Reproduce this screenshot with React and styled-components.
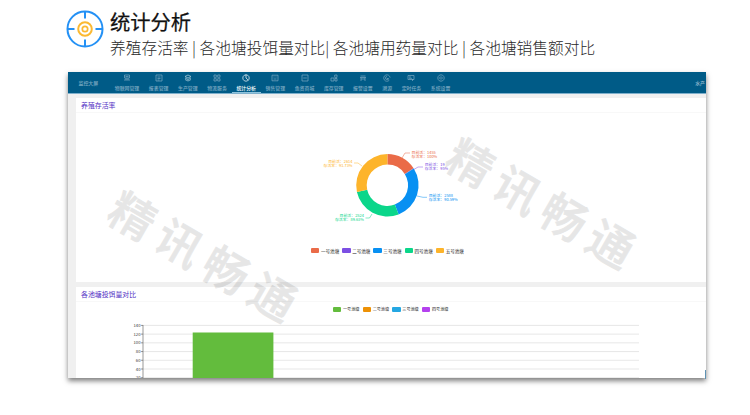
import React from 'react'
import styled, { createGlobalStyle } from 'styled-components'

const GlobalStyle = createGlobalStyle`
  * { box-sizing: border-box; }
  body {
    margin: 0;
    background: #fff;
    font-family: "Noto Sans CJK SC", "Noto Sans", sans-serif;
    overflow: hidden;
  }
`

const Page = styled.div`
  width: 750px;
  height: 415px;
  overflow: hidden;
`

const Header = styled.header`
  display: flex;
  gap: 6px;
  height: 72px;
  padding: 10px 0 0 66px;
`

const HeaderText = styled.div`
  white-space: nowrap;
`

const Title = styled.h1`
  margin: -2px 0 0;
  font-size: 20.3px;
  line-height: 26px;
  font-weight: 400;
  color: #111;
  -webkit-text-stroke: 0.25px #111;
`

const SubTitle = styled.p`
  margin: 1px 0 0;
  font-size: 15.73px;
  line-height: 26px;
  font-weight: 300;
  color: #2a2a2a;
`

const Screen = styled.main`
  position: relative;
  width: 638px;
  height: 306px;
  margin-left: 68px;
  background: #f0f0f0;
  box-shadow: 0 3px 5px rgba(0, 0, 0, 0.5);
`

const Content = styled.div`
  height: 306px;
  overflow: hidden;
`

const Nav = styled.nav`
  display: flex;
  height: 22px;
  background: #005b87;
  color: #7ba9c2;
  font-size: 4.9px;
  line-height: 6px;
  font-weight: 500;
  white-space: nowrap;
  border-bottom: 0.5px solid #7fb0cc;
`

const NavHome = styled.div`
  width: 42px;
  padding: 8px 0 0 10.5px;
`

const NavItem = styled.div`
  display: flex;
  flex-direction: column;
  align-items: center;
  gap: 2.5px;
  padding: 2px 4.8px 0;
  color: ${props => (props.$active ? '#fff' : '#7ba9c2')};
  border-bottom: 1px solid ${props => (props.$active ? '#8ec3dc' : 'transparent')};
`

const NavUser = styled.div`
  margin-left: auto;
  padding: 8px 1px 0 0;
  color: #9dbfd2;
`

const Panel = styled.section`
  height: ${props => props.$height}px;
  margin: ${props => props.$top}px 0 0 8px;
  background: #fff;
`

const PanelTitle = styled.h2`
  height: 15px;
  margin: 0;
  padding-left: 5px;
  font-size: 6.9px;
  line-height: 15px;
  font-weight: 400;
  color: #5330c4;
  border-bottom: 1px solid #f8f8f8;
`

const Chart = styled.svg`
  display: block;
  width: 630px;
  height: ${props => props.$height}px;
`

const Legend = styled.div`
  display: flex;
  gap: ${props => props.$gap}px;
  padding: ${props => props.$padding};
  font-size: ${props => props.$size}px;
  line-height: 6px;
  white-space: nowrap;
  color: #222;
`

const LegendItem = styled.div`
  display: flex;
  align-items: center;
  gap: 1.6px;
`

const Swatch = styled.span`
  width: 8.4px;
  height: 5px;
  border-radius: 1px;
  background: ${props => props.$color};
`

const Watermark = styled.div`
  position: absolute;
  left: ${props => props.$x - 108}px;
  top: ${props => props.$y - 32}px;
  width: 216px;
  height: 64px;
  display: flex;
  transform: rotate(30deg);
  font-size: 45.5px;
  line-height: 64px;
  font-weight: 500;
  color: #000;
  -webkit-text-stroke: 0.8px #000;
  opacity: 0.095;
  pointer-events: none;

  span {
    width: 54px;
    text-align: center;
  }
`

const CornerMark = styled.div`
  position: absolute;
  right: 0;
  bottom: -1px;
  width: 1px;
  height: 9px;
  background: #5f93b4;
`

const navItems = [
  { name: '物联网管理', icon: 'M1.5 1h5v3h-5zM1 6h6M2 5h4M2.5 2.5h3' },
  { name: '报表管理', icon: 'M1 1h6v6h-6zM2.5 3h3M2.5 4.5h3M2.5 6h2' },
  { name: '生产管理', icon: 'M4 1l3 1.5L4 4 1 2.5zM1 4l3 1.5L7 4M1 5.5L4 7l3-1.5', bright: true },
  { name: '物流服务', icon: 'M1 1h2.3v2.3H1zM4.7 1H7v2.3H4.7zM1 4.7h2.3V7H1zM4.7 4.7H7V7H4.7z' },
  { name: '统计分析', icon: 'M4 .8a3.2 3.2 0 1 0 .01 0M4 .8V4l2.3 2.2' },
  { name: '销售管理', icon: 'M1 1.2h6v5.6H1zM2.5 3h1M4.5 3h1M2.5 5h3' },
  { name: '鱼资商城', icon: 'M1 1h6v6H1zM2.2 4h3.6' },
  { name: '库存管理', icon: 'M1 4h3v3H1zM4.7 1H7v2.4H4.7zM5 4.5h2V7H5z' },
  { name: '报警设置', icon: 'M1.5 2h5M1 3.5h6M2 5h4M2 3.5V7M6 3.5V7' },
  { name: '溯源', icon: 'M6.3 6.2a3.2 3.2 0 1 1 .8-2.6M4 2.5a1.5 1.5 0 1 0 1.5 1.5M4 4l1.5 1.5' },
  { name: '定时任务', icon: 'M1 1.5h6v4H1zM2 3h2M2 4.3h3M5.5 5v2' },
  { name: '系统设置', icon: 'M4 .8a3.2 3.2 0 1 0 .01 0M4 2.8a1.2 1.2 0 1 0 .01 0' }
]

const ponds = [
  { name: '一号池塘', value: 1455, color: '#ea6b48' },
  { name: '二号池塘', value: 19, color: '#7c4fe3' },
  { name: '三号池塘', value: 2588, color: '#0890f2' },
  { name: '四号池塘', value: 2524, color: '#0bd68a' },
  { name: '五号池塘', value: 2614, color: '#fdb42b' }
]

const feedPonds = [
  { name: '一号池塘', color: '#63bc3d' },
  { name: '二号池塘', color: '#ed9106' },
  { name: '三号池塘', color: '#25a7e2' },
  { name: '四号池塘', color: '#b441ee' }
]

// label positions around the donut
const labels = [
  { x: 335.5, y: 40.6, rate: '100%', line: 'M326 45l3-5h5' },
  { x: 348.7, y: 52.8, rate: '95%', line: 'M337 57l5-3h5' },
  { x: 352.7, y: 83.6, rate: '90.59%', line: 'M341 83l6 1.3h4' },
  { x: 287.8, y: 104.4, rate: '89.63%', anchor: 'end', line: 'M296 101l-2.5 4h-4' },
  { x: 276.4, y: 49.6, rate: '91.73%', anchor: 'end', line: 'M286 53l-4-3h-4' }
]

const CX = 311.4
const CY = 72.3
const point = (r, angle) => `${CX + r * Math.sin(angle)} ${CY - r * Math.cos(angle)}`

const arc = (start, end) => {
  const large = end - start > Math.PI ? 1 : 0
  return `M${point(31.2, start)}A31.2 31.2 0 ${large} 1 ${point(31.2, end)}` +
    `L${point(20.7, end)}A20.7 20.7 0 ${large} 0 ${point(20.7, start)}Z`
}

const Donut = () => {
  const total = ponds.reduce((sum, pond) => sum + pond.value, 0)
  let angle = 0
  return (
    <Chart $height={133} viewBox="0 0 630 133">
      {ponds.map((pond, i) => {
        const start = angle
        angle += (pond.value / total) * Math.PI * 2
        const label = labels[i]
        return (
          <g key={pond.name} fill={pond.color}>
            <path d={arc(start, angle)} />
            <path d={label.line} fill="none" stroke={pond.color} strokeWidth="0.5" />
            <text fontSize="3.9" textAnchor={label.anchor}>
              <tspan x={label.x} y={label.y}>目前活：{pond.value}</tspan>
              <tspan x={label.x} y={label.y + 4}>存活率：{label.rate}</tspan>
            </text>
          </g>
        )
      })}
    </Chart>
  )
}

const BarChart = () => (
  <Chart $height={66} viewBox="0 0 630 66">
    {[140, 120, 100, 80, 60, 40, 20].map((tick, i) => {
      const y = 13.4 + i * 8.72
      return (
        <g key={tick}>
          <path d={`M67 ${y}H563`} stroke="#dcdcdc" strokeWidth="0.7" />
          <path d={`M65 ${y}h2`} stroke="#555" strokeWidth="0.6" />
          <text x="64.5" y={y + 1.5} fontSize="4.2" textAnchor="end" fill="#333">{tick}</text>
        </g>
      )
    })}
    <path d="M67 13V66" stroke="#555" strokeWidth="0.6" />
    <rect x="116.7" y="20.5" width="80.7" height="46" fill="#63bc3d" />
  </Chart>
)

const TargetIcon = () => (
  <svg width="38" height="38" viewBox="0 0 38 38" fill="none" strokeWidth="2">
    <circle cx="19" cy="19" r="17.5" stroke="#2491f5" />
    <path d="M19 2v6.5M19 29.5v7M2 19h6.5M29.5 19h7" stroke="#2491f5" />
    <circle cx="19" cy="19" r="6.8" stroke="#fbb932" />
    <circle cx="19" cy="19" r="2.7" stroke="#fbb932" strokeWidth="1.7" />
  </svg>
)

const ChartLegend = ({ items, ...rest }) => (
  <Legend {...rest}>
    {items.map(item => (
      <LegendItem key={item.name}>
        <Swatch $color={item.color} />
        {item.name}
      </LegendItem>
    ))}
  </Legend>
)

export default function App() {
  return (
    <Page>
      <GlobalStyle />
      <Header>
        <TargetIcon />
        <HeaderText>
          <Title>统计分析</Title>
          <SubTitle>养殖存活率 | 各池塘投饵量对比| 各池塘用药量对比 | 各池塘销售额对比</SubTitle>
        </HeaderText>
      </Header>
      <Screen>
        <Content>
          <Nav>
            <NavHome>监控大屏</NavHome>
            {navItems.map(item => (
              <NavItem key={item.name} $active={item.name === '统计分析'}>
                <svg width="8" height="8" viewBox="0 0 8 8" fill="none" strokeWidth="0.7"
                  stroke={item.bright ? '#b5d2e0' : 'currentColor'}>
                  <path d={item.icon} />
                </svg>
                {item.name}
              </NavItem>
            ))}
            <NavUser>水产</NavUser>
          </Nav>
          <Panel $top={3.5} $height={184.5}>
            <PanelTitle>养殖存活率</PanelTitle>
            <Donut />
            <ChartLegend items={ponds} $gap={3} $size={4.55} $padding="2px 0 0 235px" />
          </Panel>
          <Panel $top={5} $height={91}>
            <PanelTitle>各池塘投饵量对比</PanelTitle>
            <ChartLegend items={feedPonds} $gap={3.3} $size={4.1} $padding="4px 0 0 257px" />
            <BarChart />
          </Panel>
        </Content>
        <Watermark $x={136} $y={181.5}>
          <span>精</span><span>讯</span><span>畅</span><span>通</span>
        </Watermark>
        <Watermark $x={473.5} $y={128.5}>
          <span>精</span><span>讯</span><span>畅</span><span>通</span>
        </Watermark>
        <CornerMark />
      </Screen>
    </Page>
  )
}
